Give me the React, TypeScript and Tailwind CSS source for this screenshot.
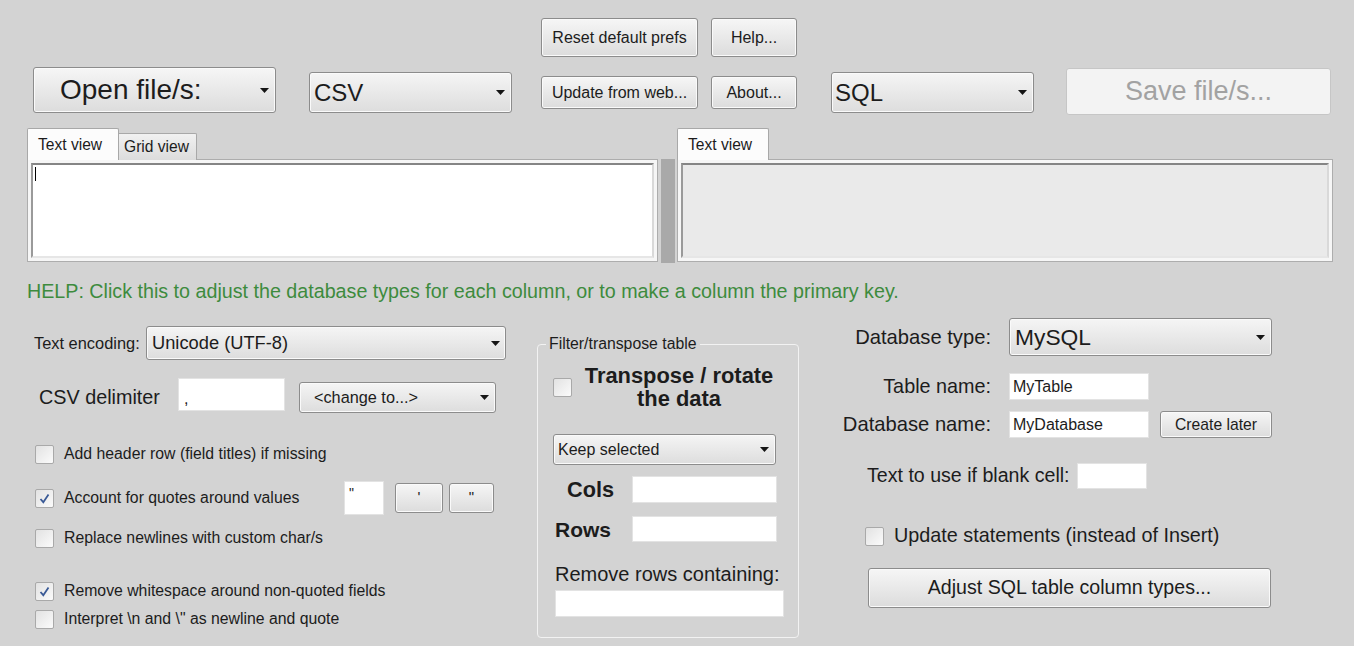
import React from 'react';

const Arrow = () => (
  <svg width="9" height="5" viewBox="0 0 9 5" className="shrink-0">
    <path d="M0 0h9L4.5 5z" fill="#151515" />
  </svg>
);

interface BoxProps {
  className?: string;
  children?: React.ReactNode;
}

const Btn: React.FC<BoxProps> = ({ className = '', children }) => (
  <div
    className={`flex items-center justify-center rounded-[3px] border border-[#8c8c8c] bg-linear-to-b from-[#f6f6f6] to-[#dcdcdc] shadow-[inset_0_0_0_1px_#fafafa] ${className}`}
  >
    {children}
  </div>
);

const Combo: React.FC<BoxProps & { text: string }> = ({ className = '', text }) => (
  <div
    className={`flex items-center justify-between rounded-[3px] border border-[#8c8c8c] bg-linear-to-b from-[#f5f5f5] to-[#dddddd] shadow-[inset_0_0_0_1px_#fafafa] ${className}`}
  >
    <span className="whitespace-nowrap">{text}</span>
    <Arrow />
  </div>
);

const TextBox: React.FC<BoxProps> = ({ className = '', children }) => (
  <div className={`bg-white border border-[#e3e3e3] whitespace-nowrap ${className}`}>{children}</div>
);

const Check: React.FC<{ checked?: boolean; className?: string }> = ({ checked, className = '' }) => (
  <div
    className={`w-[19px] h-[19px] shrink-0 rounded-[2px] border border-[#a9a9a9] bg-linear-to-br from-[#e2e2e2] to-[#fbfbfb] flex items-center justify-center ${className}`}
  >
    {checked && (
      <svg width="13" height="13" viewBox="0 0 13 13">
        <path d="M2.5 7 L5.3 10.2 L10.5 2.5" stroke="#3a5a96" strokeWidth="1.8" fill="none" />
      </svg>
    )}
  </div>
);

const Panel: React.FC<{ readOnly?: boolean }> = ({ readOnly }) => (
  <div className="h-[103px] border border-[#adadad] bg-[#f6f6f6] p-[3px]">
    <div
      className={`h-full border-2 border-t-[#858585] border-l-[#9a9a9a] border-r-[#d9d9d9] border-b-[#e6e6e6] ${
        readOnly ? 'bg-[#eaeaea]' : 'bg-white'
      }`}
    >
      {!readOnly && <div className="ml-[2px] mt-[2px] w-px h-[14px] bg-black" />}
    </div>
  </div>
);

const CheckRow: React.FC<{ checked?: boolean; label: string; className?: string; children?: React.ReactNode }> = ({
  checked,
  label,
  className = '',
  children,
}) => (
  <div className={`flex items-center ${className}`}>
    <Check checked={checked} className="ml-[2px]" />
    <span className="ml-[10px] text-[15.8px] whitespace-nowrap">{label}</span>
    {children}
  </div>
);

export default function App() {
  return (
    <div className="w-[1354px] h-[646px] overflow-hidden bg-[#d3d3d3] text-[#1c1c1c] font-['Liberation_Sans',Arial,sans-serif] leading-none">
      {/* toolbar */}
      <div className="flex items-start h-[128px]">
        <Btn className="ml-[33px] mt-[67px] w-[243px] h-[46px] !justify-between pl-[26px] pr-[6px]">
          <span className="text-[28px]">Open file/s:</span>
          <Arrow />
        </Btn>
        <Combo text="CSV" className="ml-[33px] mt-[72px] w-[203px] h-[41px] pl-[4px] pr-[6px] text-[24px]" />
        <div className="ml-[29px] mt-[18px] w-[157px] flex flex-col">
          <Btn className="h-[39px] text-[16px]">Reset default prefs</Btn>
          <Btn className="mt-[19px] h-[33px] text-[16px]">Update from web...</Btn>
        </div>
        <div className="ml-[13px] mt-[18px] w-[86px] flex flex-col">
          <Btn className="h-[39px] text-[16px]">Help...</Btn>
          <Btn className="mt-[19px] h-[33px] text-[16px]">About...</Btn>
        </div>
        <Combo text="SQL" className="ml-[34px] mt-[72px] w-[203px] h-[41px] pl-[3px] pr-[6px] text-[24px]" />
        <div className="ml-[32px] mt-[68px] w-[265px] h-[47px] rounded-[3px] border border-[#c6c6c6] bg-[#f3f3f3] flex items-center justify-center text-[27px] text-[#a2a2a2]">
          Save file/s...
        </div>
      </div>

      {/* text views */}
      <div className="flex items-start">
        <div className="ml-[27px] w-[631px]">
          <div className="relative z-10 -mb-px flex items-end h-[32px]">
            <div className="h-[32px] w-[92px] flex items-center pl-[10px] bg-[#fcfcfc] border border-b-0 border-[#a8a8a8] rounded-t-[2px] text-[15.6px]">
              Text view
            </div>
            <div className="h-[27px] w-[78px] flex items-center pl-[5px] bg-linear-to-b from-[#f1f1f1] to-[#dcdcdc] border border-l-0 border-b-0 border-[#a8a8a8] rounded-tr-[2px] text-[15.6px]">
              Grid view
            </div>
          </div>
          <Panel />
        </div>
        <div className="ml-[3px] mt-[31px] w-[14px] h-[104px] bg-[#a9a9a9]" />
        <div className="ml-[2px] w-[656px]">
          <div className="relative z-10 -mb-px flex items-end h-[32px]">
            <div className="h-[32px] w-[92px] flex items-center pl-[10px] bg-[#fcfcfc] border border-b-0 border-[#a8a8a8] rounded-t-[2px] text-[15.6px]">
              Text view
            </div>
          </div>
          <Panel readOnly />
        </div>
      </div>

      <div className="ml-[27px] mt-[17px] text-[19.7px] leading-[23px] text-[#3d8b3d] whitespace-nowrap">
        HELP: Click this to adjust the database types for each column, or to make a column the primary key.
      </div>

      {/* options */}
      <div className="flex items-start">
        <div className="ml-[33px] mt-[23px] w-[473px]">
          <div className="flex items-center h-[34px]">
            <span className="w-[113px] pl-[1px] text-[16.4px] whitespace-nowrap">Text encoding:</span>
            <Combo text="Unicode (UTF-8)" className="w-[360px] h-[34px] pl-[5px] pr-[5px] text-[18.3px]" />
          </div>
          <div className="flex items-start mt-[18px]">
            <span className="ml-[6px] mt-[8px] text-[19.8px] leading-[23px] whitespace-nowrap">CSV delimiter</span>
            <TextBox className="ml-[18px] w-[107px] h-[33px] pl-[5px] pt-[12px] text-[16px]">,</TextBox>
            <Combo text="<change to...>" className="ml-[14px] mt-[4px] w-[197px] h-[31px] pl-[14px] pr-[6px] text-[16.3px]" />
          </div>
          <CheckRow label="Add header row (field titles) if missing" className="mt-[26px] h-[30px]" />
          <div className="flex items-center mt-[11px] h-[36px]">
            <Check checked className="ml-[2px]" />
            <span className="ml-[10px] w-[280px] text-[15.8px] whitespace-nowrap">Account for quotes around values</span>
            <TextBox className="w-[40px] h-[34px] pl-[4px] pt-[4px] text-[14px]">"</TextBox>
            <Btn className="ml-[11px] w-[48px] h-[30px] !items-start pt-[5px] text-[15px]">'</Btn>
            <Btn className="ml-[6px] w-[45px] h-[30px] !items-start pt-[5px] text-[15px]">"</Btn>
          </div>
          <CheckRow label="Replace newlines with custom char/s" className="mt-[7px] h-[30px]" />
          <CheckRow checked label="Remove whitespace around non-quoted fields" className="mt-[26px] h-[24px]" />
          <CheckRow label={'Interpret \\n and \\" as newline and quote'} className="mt-[4px] h-[24px]" />
        </div>

        <fieldset className="ml-[31px] mt-[32px] w-[262px] h-[303px] border border-[#f2f2f2] rounded-[4px]">
          <legend className="ml-[8px] px-[3px] text-[15.8px] leading-[18px] whitespace-nowrap">Filter/transpose table</legend>
          <div className="pl-[15px]">
            <div className="flex items-center mt-[11px]">
              <Check />
              <div className="ml-[7px] w-[200px] text-center font-bold text-[21.9px] leading-[23px]">
                Transpose / rotate
                <br />
                the data
              </div>
            </div>
            <Combo text="Keep selected" className="mt-[24px] w-[223px] h-[31px] pl-[4px] pr-[6px] text-[16px]" />
            <div className="flex items-center mt-[11px]">
              <span className="w-[79px] pl-[14px] font-bold text-[21.7px]">Cols</span>
              <TextBox className="w-[145px] h-[27px]" />
            </div>
            <div className="flex items-center mt-[13px]">
              <span className="w-[79px] pl-[2px] font-bold text-[21px]">Rows</span>
              <TextBox className="w-[145px] h-[26px]" />
            </div>
            <div className="mt-[21px] pl-[2px] text-[20px] leading-[23px] whitespace-nowrap">Remove rows containing:</div>
            <TextBox className="mt-[4px] ml-[2px] w-[229px] h-[27px]" />
          </div>
        </fieldset>

        <div className="ml-[43px] mt-[15px]">
          <div className="flex items-center">
            <span className="w-[149px] text-right text-[20.2px] whitespace-nowrap">Database type:</span>
            <Combo text="MySQL" className="ml-[18px] w-[263px] h-[38px] pl-[5px] pr-[6px] text-[22.8px]" />
          </div>
          <div className="flex items-center mt-[17px]">
            <span className="w-[149px] text-right text-[19.8px] whitespace-nowrap">Table name:</span>
            <TextBox className="ml-[18px] w-[140px] h-[27px] flex items-center pl-[3px] text-[16px]">MyTable</TextBox>
          </div>
          <div className="flex items-center mt-[11px]">
            <span className="w-[149px] text-right text-[20.2px] whitespace-nowrap">Database name:</span>
            <TextBox className="ml-[18px] w-[140px] h-[27px] flex items-center pl-[3px] text-[16px]">MyDatabase</TextBox>
            <Btn className="ml-[11px] w-[112px] h-[27px] text-[15.7px]">Create later</Btn>
          </div>
          <div className="flex items-center mt-[25px]">
            <span className="ml-[25px] text-[19.6px] whitespace-nowrap">Text to use if blank cell:</span>
            <TextBox className="ml-[7px] w-[70px] h-[26px]" />
          </div>
          <div className="flex items-center mt-[35px] h-[24px]">
            <Check className="ml-[23px]" />
            <span className="ml-[10px] text-[19.8px] whitespace-nowrap">Update statements (instead of Insert)</span>
          </div>
          <Btn className="mt-[20px] ml-[26px] w-[403px] h-[40px] text-[19.6px]">Adjust SQL table column types...</Btn>
        </div>
      </div>
    </div>
  );
}
